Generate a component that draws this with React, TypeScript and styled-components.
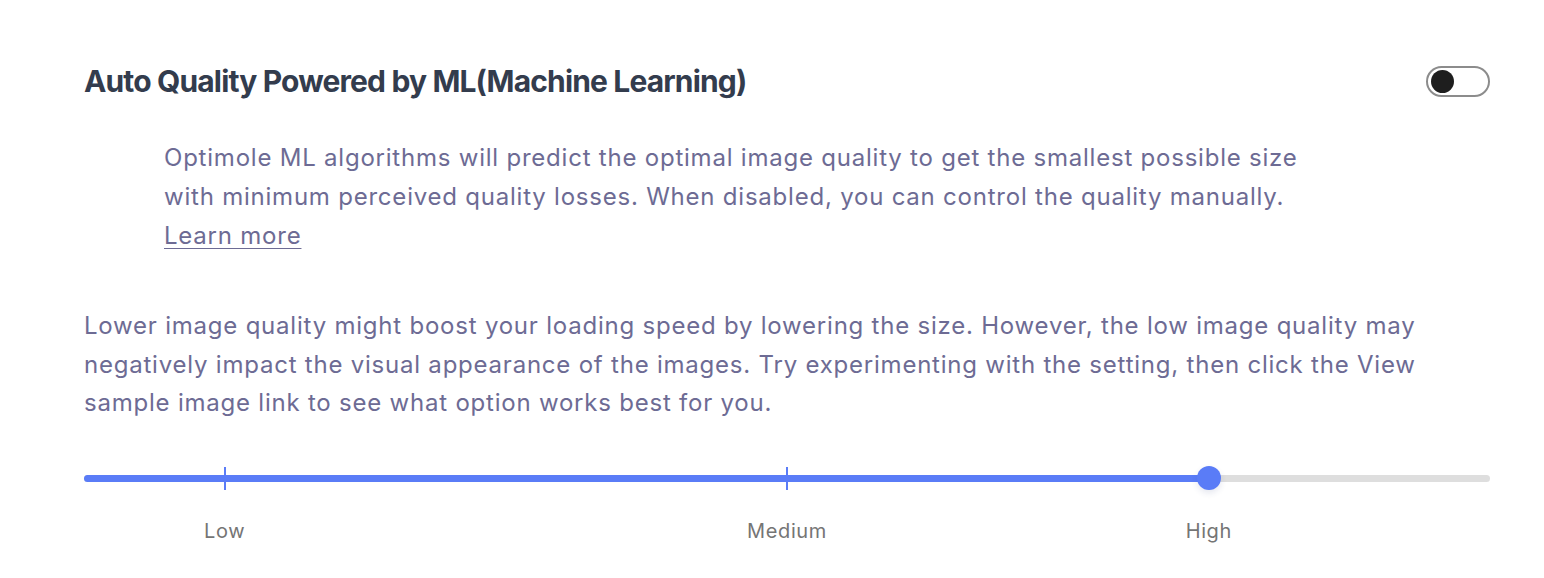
import React from "react";
import styled, { createGlobalStyle } from "styled-components";

const GlobalStyle = createGlobalStyle`
  html, body { margin: 0; padding: 0; background: #ffffff; }
  body { font-family: Inter, "Noto Sans", sans-serif; -webkit-font-smoothing: antialiased; }
`;

const Page = styled.div`
  width: 1406px;
  padding: 55px 0 0 84px;
  display: flex;
  flex-direction: column;
`;

const Header = styled.div`
  display: flex;
  align-items: center;
  justify-content: space-between;
`;

const Title = styled.h2`
  margin: 0;
  font-size: 30px;
  line-height: 52px;
  font-weight: 700;
  letter-spacing: -0.85px;
  color: #333c4d;
`;

const Toggle = styled.button<{ $on: boolean }>`
  display: flex;
  align-items: center;
  justify-content: ${(p) => (p.$on ? "flex-end" : "flex-start")};
  width: 64px;
  height: 31px;
  padding: 0 2.5px;
  border: 2px solid #8c8c8c;
  border-radius: 16px;
  background: #ffffff;
  cursor: pointer;
  box-sizing: border-box;
`;

const Knob = styled.span`
  width: 23px;
  height: 23px;
  border-radius: 50%;
  background: #1e1e1e;
`;

const Description = styled.p`
  margin: 31px 0 0 80px;
  max-width: 1170px;
  font-size: 24px;
  line-height: 39px;
  letter-spacing: 0.78px;
  color: #6d6b94;
`;

const LearnMore = styled.a`
  color: #6d6b94;
  text-decoration: underline;
  text-underline-offset: 4px;
  text-decoration-thickness: 1px;
`;

const Intro = styled.p`
  margin: 52px 0 0 0;
  font-size: 24px;
  line-height: 38.5px;
  letter-spacing: 0.78px;
  color: #6d6b94;
`;

const SliderBlock = styled.div`
  margin-top: 52px;
  display: flex;
  flex-direction: column;
  gap: 35px;
`;

const Track = styled.div`
  position: relative;
  height: 7px;
  border-radius: 4px;
  background: #dedede;
`;

const Fill = styled.div`
  height: 100%;
  border-radius: 4px;
  background: #5a7cf7;
`;

const Tick = styled.span`
  position: absolute;
  top: -8px;
  width: 2px;
  height: 23px;
  margin-left: -1px;
  background: #5a7cf7;
`;

const Thumb = styled.span`
  position: absolute;
  top: 50%;
  width: 24px;
  height: 24px;
  margin: -12px 0 0 -12px;
  border-radius: 50%;
  background: #5a7cf7;
  box-shadow: 0 3px 6px rgba(40, 60, 120, 0.12);
`;

const Labels = styled.div`
  display: grid;
  grid-template-columns: repeat(10, 1fr);
  grid-template-rows: 28px;
`;

const Label = styled.span<{ $from: number; $to: number }>`
  grid-row: 1;
  grid-column: ${(p) => `${p.$from} / ${p.$to}`};
  text-align: center;
  font-size: 20px;
  line-height: 28px;
  letter-spacing: 0.6px;
  color: #757575;
  white-space: nowrap;
`;

const marks = [
  { label: "Low", pos: 10, from: 1, to: 3 },
  { label: "Medium", pos: 50, from: 1, to: 11 },
  { label: "High", pos: 80, from: 7, to: 11 },
];

export default function App() {
  const value = 80;
  return (
    <>
      <GlobalStyle />
      <Page>
        <Header>
          <Title>Auto Quality Powered by ML(Machine Learning)</Title>
          <Toggle $on={false} aria-label="Auto quality">
            <Knob />
          </Toggle>
        </Header>
        <Description>
          Optimole ML algorithms will predict the optimal image quality to get the smallest possible size
          with minimum perceived quality losses. When disabled, you can control the quality manually.
          <br />
          <LearnMore href="#">Learn more</LearnMore>
        </Description>
        <Intro>
          Lower image quality might boost your loading speed by lowering the size. However, the low image
          quality may negatively impact the visual appearance of the images. Try experimenting with the
          setting, then click the View sample image link to see what option works best for you.
        </Intro>
        <SliderBlock>
          <Track>
            <Fill style={{ width: `${value}%` }} />
            {marks
              .filter((m) => m.pos < value)
              .map((m) => (
                <Tick key={m.label} style={{ left: `${m.pos}%` }} />
              ))}
            <Thumb style={{ left: `${value}%` }} />
          </Track>
          <Labels>
            {marks.map((m) => (
              <Label key={m.label} $from={m.from} $to={m.to}>
                {m.label}
              </Label>
            ))}
          </Labels>
        </SliderBlock>
      </Page>
    </>
  );
}
